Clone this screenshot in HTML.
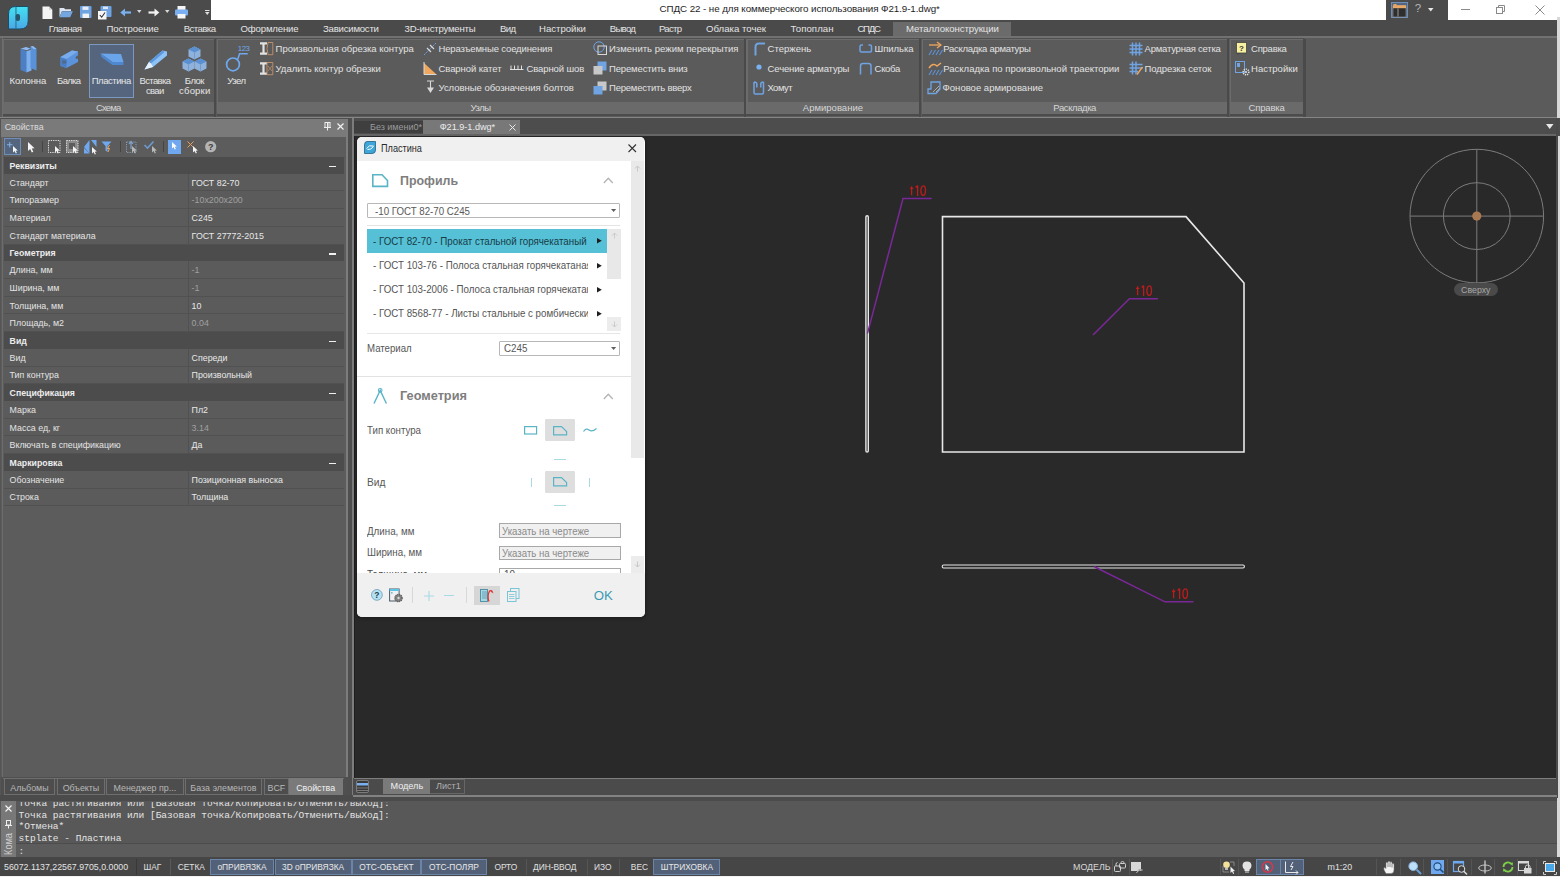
<!DOCTYPE html>
<html><head><meta charset="utf-8">
<style>
*{margin:0;padding:0;box-sizing:border-box}
html,body{width:1560px;height:877px;overflow:hidden;background:#3c3c3c;font-family:"Liberation Sans",sans-serif;font-size:9.5px;color:#e6e6e6}
.a{position:absolute}
.t{position:absolute;white-space:nowrap;line-height:1}
svg{position:absolute;overflow:visible}
</style></head><body>
<div class="a" style="left:0px;top:0px;width:1560px;height:20px;background:#4b4b4b;"></div>
<div class="a" style="left:211px;top:0px;width:1176px;height:19.5px;background:#ffffff;"></div>
<div class="a" style="left:1448px;top:0px;width:112px;height:19.5px;background:#ffffff;"></div>
<div class="a" style="left:0px;top:19.5px;width:1557px;height:17px;background:#4a4a4a;"></div>
<div class="t" style="left:659.5px;top:3.68px;font-size:9.8px;color:#1e1e1e;letter-spacing:-0.078px;">СПДС 22 - не для коммерческого использования Ф21.9-1.dwg*</div>
<svg style="left:8px;top:5.5px" width="21" height="24" viewBox="0 0 21 24"><defs><linearGradient id="lg" x1="0" y1="0" x2="0" y2="1"><stop offset="0" stop-color="#44e0f2"/><stop offset="1" stop-color="#4aa8e6"/></linearGradient></defs>
<path d="M7.5 0.5 H20.2 V15 Q20.2 23 12 23 H0.5 V8 Q0.5 0.5 7.5 0.5Z" fill="url(#lg)" stroke="#1d4c66" stroke-width="1"/>
<rect x="7.3" y="1" width="1.3" height="22" fill="#2a6e90" opacity="0.8"/>
<rect x="7.6" y="8" width="4.4" height="7" rx="2" fill="#25566e"/></svg>
<svg style="left:42px;top:5.5px" width="11" height="13.5" viewBox="0 0 11 13.5"><path d="M0.5 0.5 H7 L10.3 3.8 V13 H0.5Z" fill="#f4f4f4"/><path d="M7 0.5 V3.8 H10.3" fill="#cfcfcf"/></svg>
<svg style="left:59px;top:6.5px" width="14" height="11" viewBox="0 0 14 11"><path d="M0.5 1 H5 L6.2 2.3 H12 V4 H3 L0.5 10Z" fill="#dde6f0"/><path d="M3 4.2 H13.8 L11.2 10.3 H0.5Z" fill="#74a6e0"/></svg>
<svg style="left:79.5px;top:6px" width="12" height="12.5" viewBox="0 0 12 12.5"><rect x="0" y="0" width="11.5" height="12" rx="1" fill="#6fa3e2"/><rect x="2.5" y="0.6" width="6" height="3.3" fill="#e9eef6"/><rect x="2.5" y="7.6" width="6.5" height="4.4" fill="#f2f2f2"/></svg>
<svg style="left:97.5px;top:5.5px" width="14" height="14" viewBox="0 0 14 14"><rect x="2.5" y="0" width="11" height="11" rx="1" fill="#6fa3e2"/><rect x="5" y="0.6" width="5" height="2.5" fill="#dbe6f2"/><rect x="0" y="5" width="8.5" height="8.5" fill="#f6f6f6"/><path d="M1.8 9 L3.7 11.2 L7 6.5" fill="none" stroke="#333" stroke-width="1.1"/></svg>
<svg style="left:119.5px;top:7.5px" width="12" height="9" viewBox="0 0 12 9"><path d="M11 4.5 H3.5" stroke="#7ab0ee" stroke-width="2.2"/><path d="M0.3 4.5 L5 0.5 V8.5Z" fill="#7ab0ee"/></svg>
<svg style="left:136.5px;top:10px" width="5" height="4" viewBox="0 0 5 4"><path d="M0 0 H4.5 L2.25 3Z" fill="#d8d8d8"/></svg>
<svg style="left:147.5px;top:7.5px" width="12" height="9" viewBox="0 0 12 9"><path d="M0.5 4.5 H8" stroke="#f2f2f2" stroke-width="2.2"/><path d="M11.3 4.5 L6.5 0.5 V8.5Z" fill="#f2f2f2"/></svg>
<svg style="left:164.5px;top:10px" width="5" height="4" viewBox="0 0 5 4"><path d="M0 0 H4.5 L2.25 3Z" fill="#d8d8d8"/></svg>
<svg style="left:175px;top:6px" width="13" height="13" viewBox="0 0 13 13"><rect x="2.5" y="0" width="8" height="4" fill="#f4f4f4"/><rect x="0" y="3.5" width="13" height="6" rx="1" fill="#79aef0"/><rect x="2.5" y="8" width="8" height="4.5" fill="#f4f4f4"/></svg>
<svg style="left:204.5px;top:10px" width="5" height="6" viewBox="0 0 5 6"><rect x="0" y="0" width="4.5" height="1" fill="#e0e0e0"/><path d="M0 2 H4.5 L2.25 5Z" fill="#e0e0e0"/></svg>
<div class="a" style="left:1386.3px;top:0px;width:61.7px;height:19.5px;background:#4b4b4b;"></div>
<svg style="left:1391px;top:1.5px" width="17" height="16" viewBox="0 0 17 16"><rect x="0.5" y="0.5" width="16" height="15" fill="#55657d" stroke="#6c8fb8" stroke-width="1"/><rect x="2" y="4" width="13" height="11" fill="#2e2e2e" stroke="#9a9a9a" stroke-width="0.6"/><rect x="2" y="3.2" width="13" height="3" fill="#e8a868"/><rect x="2.5" y="2" width="3" height="1.5" fill="#e8a868"/><rect x="6.5" y="6.5" width="1" height="8" fill="#9a9a9a"/></svg>
<div class="t" style="left:1414.8px;top:3.46px;font-size:11.5px;color:#b8b8b8;">?</div>
<svg style="left:1428px;top:7.5px" width="6" height="5" viewBox="0 0 6 5"><path d="M0 0 H5.5 L2.75 3.5Z" fill="#e8e8e8"/></svg>
<div class="a" style="left:1461px;top:9px;width:8.5px;height:1px;background:#8a8a8a;"></div>
<svg style="left:1496px;top:5px" width="9" height="9" viewBox="0 0 9 9"><rect x="0.5" y="2.5" width="6" height="6" fill="none" stroke="#8a8a8a" stroke-width="1"/><path d="M2.5 2.5 V0.5 H8.5 V6.5 H6.5" fill="none" stroke="#8a8a8a" stroke-width="1"/></svg>
<svg style="left:1534.5px;top:5px" width="10" height="10" viewBox="0 0 10 10"><path d="M0.5 0.5 L9.5 9.5 M9.5 0.5 L0.5 9.5" stroke="#8a8a8a" stroke-width="1"/></svg>
<div class="a" style="left:1557.3px;top:17px;width:2.7px;height:860px;background:#d8d8d8;"></div>
<div class="a" style="left:893px;top:22px;width:118px;height:14.5px;background:#6b6b6b;"></div>
<div class="t" style="left:48.7px;top:24.47px;font-size:9.6px;color:#e4e4e4;letter-spacing:-0.540px;">Главная</div>
<div class="t" style="left:106.4px;top:24.47px;font-size:9.6px;color:#e4e4e4;letter-spacing:-0.095px;">Построение</div>
<div class="t" style="left:183.8px;top:24.47px;font-size:9.6px;color:#e4e4e4;letter-spacing:-0.580px;">Вставка</div>
<div class="t" style="left:240.5px;top:24.47px;font-size:9.6px;color:#e4e4e4;letter-spacing:-0.154px;">Оформление</div>
<div class="t" style="left:323px;top:24.47px;font-size:9.6px;color:#e4e4e4;letter-spacing:-0.226px;">Зависимости</div>
<div class="t" style="left:404.6px;top:24.47px;font-size:9.6px;color:#e4e4e4;letter-spacing:-0.215px;">3D-инструменты</div>
<div class="t" style="left:500px;top:24.47px;font-size:9.6px;color:#e4e4e4;letter-spacing:-0.684px;">Вид</div>
<div class="t" style="left:539px;top:24.47px;font-size:9.6px;color:#e4e4e4;letter-spacing:-0.009px;">Настройки</div>
<div class="t" style="left:609.7px;top:24.47px;font-size:9.6px;color:#e4e4e4;letter-spacing:-0.681px;">Вывод</div>
<div class="t" style="left:659px;top:24.47px;font-size:9.6px;color:#e4e4e4;letter-spacing:-0.740px;">Растр</div>
<div class="t" style="left:706px;top:24.47px;font-size:9.6px;color:#e4e4e4;letter-spacing:0.014px;">Облака точек</div>
<div class="t" style="left:790.5px;top:24.47px;font-size:9.6px;color:#e4e4e4;letter-spacing:0.096px;">Топоплан</div>
<div class="t" style="left:857.4px;top:24.47px;font-size:9.6px;color:#e4e4e4;letter-spacing:-1.222px;">СПДС</div>
<div class="t" style="left:906px;top:24.47px;font-size:9.6px;color:#e4e4e4;letter-spacing:-0.059px;">Металлоконструкции</div>
<div class="a" style="left:0px;top:36.5px;width:1557px;height:81.5px;background:#5b5b5b;"></div>
<div class="a" style="left:0px;top:36px;width:1557px;height:2px;background:#717171;"></div>
<div class="a" style="left:0px;top:116.5px;width:1557px;height:1.4px;background:#858585;"></div>
<div class="a" style="left:3px;top:38px;width:1301px;height:1px;background:#505050;"></div>
<div class="a" style="left:1.5px;top:38px;width:1px;height:79px;background:#6e6e6e;"></div>
<div class="a" style="left:3px;top:101.7px;width:211px;height:11.9px;background:#6a6a6a;"></div>
<div class="a" style="left:3px;top:39px;width:211px;height:1.2px;background:#6c6c6c;"></div>
<div class="a" style="left:3px;top:39px;width:1.2px;height:76px;background:#6c6c6c;"></div>
<div class="a" style="left:3px;top:113.6px;width:213px;height:2.9px;background:#4c4c4c;"></div>
<div class="a" style="left:213.7px;top:39px;width:2.3px;height:78px;background:#4a4a4a;"></div>
<div class="a" style="left:216.8px;top:101.7px;width:527.2px;height:11.9px;background:#6a6a6a;"></div>
<div class="a" style="left:216.8px;top:39px;width:527.2px;height:1.2px;background:#6c6c6c;"></div>
<div class="a" style="left:216.8px;top:39px;width:1.2px;height:76px;background:#6c6c6c;"></div>
<div class="a" style="left:216.8px;top:113.6px;width:529.2px;height:2.9px;background:#4c4c4c;"></div>
<div class="a" style="left:743.7px;top:39px;width:2.3px;height:78px;background:#4a4a4a;"></div>
<div class="a" style="left:746.4px;top:101.7px;width:173.10000000000002px;height:11.9px;background:#6a6a6a;"></div>
<div class="a" style="left:746.4px;top:39px;width:173.10000000000002px;height:1.2px;background:#6c6c6c;"></div>
<div class="a" style="left:746.4px;top:39px;width:1.2px;height:76px;background:#6c6c6c;"></div>
<div class="a" style="left:746.4px;top:113.6px;width:175.10000000000002px;height:2.9px;background:#4c4c4c;"></div>
<div class="a" style="left:919.2px;top:39px;width:2.3px;height:78px;background:#4a4a4a;"></div>
<div class="a" style="left:921.5px;top:101.7px;width:305.29999999999995px;height:11.9px;background:#6a6a6a;"></div>
<div class="a" style="left:921.5px;top:39px;width:305.29999999999995px;height:1.2px;background:#6c6c6c;"></div>
<div class="a" style="left:921.5px;top:39px;width:1.2px;height:76px;background:#6c6c6c;"></div>
<div class="a" style="left:921.5px;top:113.6px;width:307.29999999999995px;height:2.9px;background:#4c4c4c;"></div>
<div class="a" style="left:1226.5px;top:39px;width:2.3px;height:78px;background:#4a4a4a;"></div>
<div class="a" style="left:1229.8px;top:101.7px;width:73.79999999999995px;height:11.9px;background:#6a6a6a;"></div>
<div class="a" style="left:1229.8px;top:39px;width:73.79999999999995px;height:1.2px;background:#6c6c6c;"></div>
<div class="a" style="left:1229.8px;top:39px;width:1.2px;height:76px;background:#6c6c6c;"></div>
<div class="a" style="left:1229.8px;top:113.6px;width:75.79999999999995px;height:2.9px;background:#4c4c4c;"></div>
<div class="a" style="left:1303.3px;top:39px;width:2.3px;height:78px;background:#4a4a4a;"></div>
<div class="a" style="left:89px;top:44px;width:44.7px;height:53.6px;background:#55657d;border:1px solid #7a98c0"></div>
<div class="t" style="left:95.9px;top:102.82px;font-size:9.5px;color:#d6d6d6;letter-spacing:-0.801px;">Схема</div>
<div class="t" style="left:470.5px;top:102.82px;font-size:9.5px;color:#d6d6d6;letter-spacing:-0.541px;">Узлы</div>
<div class="t" style="left:802.8px;top:102.82px;font-size:9.5px;color:#d6d6d6;letter-spacing:0.012px;">Армирование</div>
<div class="t" style="left:1053.3px;top:102.82px;font-size:9.5px;color:#d6d6d6;letter-spacing:-0.404px;">Раскладка</div>
<div class="t" style="left:1248.6px;top:102.82px;font-size:9.5px;color:#d6d6d6;letter-spacing:-0.195px;">Справка</div>
<div class="t" style="left:9.6px;top:76.42px;font-size:9.5px;color:#e6e6e6;letter-spacing:-0.103px;">Колонна</div>
<div class="t" style="left:57.1px;top:76.42px;font-size:9.5px;color:#e6e6e6;letter-spacing:-0.677px;">Балка</div>
<div class="t" style="left:91.7px;top:76.42px;font-size:9.5px;color:#e6e6e6;letter-spacing:-0.442px;">Пластина</div>
<div class="t" style="left:139.4px;top:76.42px;font-size:9.5px;color:#e6e6e6;letter-spacing:-0.602px;">Вставка</div>
<div class="t" style="left:146px;top:86.02px;font-size:9.5px;color:#e6e6e6;letter-spacing:-0.660px;">сваи</div>
<div class="t" style="left:184.8px;top:76.42px;font-size:9.5px;color:#e6e6e6;letter-spacing:-0.506px;">Блок</div>
<div class="t" style="left:179.1px;top:86.02px;font-size:9.5px;color:#e6e6e6;letter-spacing:0.176px;">сборки</div>
<div class="t" style="left:227.2px;top:76.42px;font-size:9.5px;color:#e6e6e6;letter-spacing:-0.487px;">Узел</div>
<svg style="left:19.5px;top:45.5px" width="17" height="27" viewBox="0 0 17 27"><path d="M0.5 2.8 L7 5.2 V26.5 L0.5 24Z" fill="#4c7fc4"/><path d="M6.5 5.2 L11.5 3.5 V24.5 L6.5 26.5Z" fill="#7db0ec"/><path d="M10.5 0.5 L16.5 2.8 V24.5 L10.5 22Z" fill="#5a92da"/><path d="M0.5 2.8 L6 1 L10.5 2.6 L7 4.2Z M10.5 0.5 L13 0 L16.5 2.8 L14 3.2Z" fill="#8ebcf2"/></svg>
<svg style="left:60px;top:49.5px" width="18.5" height="18.5" viewBox="0 0 18.5 18.5"><path d="M0.5 7 L12 0.5 L18 1.5 V5.5 L15.8 6.8 V9 L18 8.5 V12 L6.5 18 L0.5 16Z" fill="#5b94dc"/><path d="M0.5 7 L6.5 9 V18 L0.5 16Z" fill="#4a7fc4"/><path d="M0.5 7 L12 0.5 L18 1.5 L6.5 9Z" fill="#78acea"/><path d="M2.2 10.5 H6.5 V13.5 H2.2Z" fill="#5a5a5a" opacity="0.55"/></svg>
<svg style="left:99.5px;top:53px" width="24" height="12.5" viewBox="0 0 24 12.5"><path d="M0.5 0.5 L21 1 L23.5 9 L12.5 9 Z" fill="#6aa4ea"/><path d="M0.5 0.5 L1.5 4 L12.5 12 H23.5 V9 H12.5Z" fill="#4f88d0"/></svg>
<svg style="left:143.5px;top:49.5px" width="23.5" height="20" viewBox="0 0 23.5 20"><path d="M0.5 19.5 L5 12 L18.5 0.5 L23 1.5 V5.5 L9 17 Z" fill="#8cc2f6"/><path d="M5 12 L18.5 0.5 L20.5 2 L7 13.5Z" fill="#5c98e0"/><path d="M0.5 19.5 L5 12 L7 13.5 L9 17Z" fill="#e6f2ff"/></svg>
<svg style="left:181.5px;top:45.5px" width="25" height="27" viewBox="0 0 25 27"><path d="M12.5 0.5 L18.5 3.5 V10.5 L12.5 13.5 L6.5 10.5 V3.5Z" fill="#8fb2dc"/><path d="M12.5 0.5 L18.5 3.5 L12.5 6.5 L6.5 3.5Z" fill="#5a8fd2"/><path d="M12.5 6.5 V13.5" stroke="#6f95c4" stroke-width="0.8"/><path d="M6.5 12.5 L12.5 15.5 V22.5 L6.5 25.5 L0.5 22.5 V15.5Z" fill="#8fb2dc"/><path d="M6.5 12.5 L12.5 15.5 L6.5 18.5 L0.5 15.5Z" fill="#5a8fd2"/><path d="M6.5 18.5 V25.5" stroke="#6f95c4" stroke-width="0.8"/><path d="M18.5 12.5 L24.5 15.5 V22.5 L18.5 25.5 L12.5 22.5 V15.5Z" fill="#8fb2dc"/><path d="M18.5 12.5 L24.5 15.5 L18.5 18.5 L12.5 15.5Z" fill="#5a8fd2"/><path d="M18.5 18.5 V25.5" stroke="#6f95c4" stroke-width="0.8"/></svg>
<svg style="left:225px;top:46px" width="26" height="26" viewBox="0 0 26 26"><circle cx="8" cy="18.4" r="6.4" fill="none" stroke="#70a8ec" stroke-width="1.7"/><path d="M12.6 13.6 L14.6 7.8 H22.7" fill="none" stroke="#70a8ec" stroke-width="1.5"/></svg>
<div class="t" style="left:237.8px;top:45.24px;font-size:7.8px;color:#70a8ec;letter-spacing:-0.507px;">123</div>
<svg style="left:260px;top:42px" width="14" height="13.5" viewBox="0 0 14 13.5"><path d="M0 0.3 H7 V2.6 H4.6 V10.4 H7 V12.7 H0 V10.4 H2.4 V2.6 H0Z" fill="#e2e2e2"/><path d="M8 0.5 H12.8 V12.7 H8 Q6 6.6 8 0.5Z" fill="none" stroke="#c8936a" stroke-width="0.9"/></svg>
<svg style="left:260px;top:61.5px" width="14" height="13.5" viewBox="0 0 14 13.5"><path d="M0 0.3 H7 V2.6 H4.6 V10.4 H7 V12.7 H0 V10.4 H2.4 V2.6 H0Z" fill="#e2e2e2"/><path d="M7 0.5 H12.8 V12.7 H7 V0.5Z" fill="none" stroke="#c8936a" stroke-width="0.9"/><path d="M8 4 L12 9 M12 4 L8 9" stroke="#c8936a" stroke-width="0.7"/></svg>
<div class="t" style="left:275.6px;top:44.22px;font-size:9.5px;color:#e2e2e2;letter-spacing:0.005px;">Произвольная обрезка контура</div>
<div class="t" style="left:275.6px;top:63.82px;font-size:9.5px;color:#e2e2e2;letter-spacing:-0.025px;">Удалить контур обрезки</div>
<svg style="left:423px;top:41.5px" width="14" height="14" viewBox="0 0 14 14"><path d="M1 13 L13 1" stroke="#6fa3e2" stroke-width="1" stroke-dasharray="2 1"/><path d="M4 6 L8 10 M7 3 L11 7" stroke="#d8d8d8" stroke-width="1.2"/></svg>
<svg style="left:422.5px;top:62px" width="14" height="13" viewBox="0 0 14 13"><path d="M1 1 V12 H13Z" fill="#f0a860"/><path d="M1 0 V12.5 H13.5" fill="none" stroke="#d8d8d8" stroke-width="1"/></svg>
<svg style="left:426px;top:80px" width="9" height="13" viewBox="0 0 9 13"><path d="M1 1 H8 M4.5 1 V8 M2 8 H7 L4.5 12Z" stroke="#d8d8d8" stroke-width="1.1" fill="#d8d8d8"/></svg>
<div class="t" style="left:438.5px;top:44.22px;font-size:9.5px;color:#e2e2e2;letter-spacing:-0.143px;">Неразъемные соединения</div>
<div class="t" style="left:438.5px;top:63.82px;font-size:9.5px;color:#e2e2e2;letter-spacing:-0.071px;">Сварной катет</div>
<svg style="left:510px;top:65px" width="14" height="6" viewBox="0 0 14 6"><path d="M0 4.5 H13.5 M1 0.5 V4.5 M4.5 0.5 V4.5 M8 0.5 V4.5 M11.5 0.5 V4.5" stroke="#e0e0e0" stroke-width="1"/></svg>
<div class="t" style="left:526.4px;top:63.82px;font-size:9.5px;color:#e2e2e2;letter-spacing:-0.090px;">Сварной шов</div>
<div class="t" style="left:438.5px;top:82.62px;font-size:9.5px;color:#e2e2e2;letter-spacing:-0.023px;">Условные обозначения болтов</div>
<svg style="left:592.5px;top:41px" width="14" height="14" viewBox="0 0 14 14"><circle cx="6" cy="6" r="5.2" fill="none" stroke="#6fa3e2" stroke-width="1"/><rect x="5" y="5" width="8.5" height="8.5" fill="none" stroke="#d8d8d8" stroke-width="1"/></svg>
<svg style="left:592.5px;top:61px" width="14" height="14" viewBox="0 0 14 14"><rect x="4.5" y="0.5" width="9" height="9" fill="#6fa3e2"/><rect x="0.5" y="5" width="9" height="8.5" fill="#c8c8c8"/></svg>
<svg style="left:592.5px;top:80.5px" width="14" height="14" viewBox="0 0 14 14"><rect x="4.5" y="0.5" width="9" height="9" fill="#c8c8c8"/><rect x="0.5" y="5" width="9" height="8.5" fill="#6fa3e2"/></svg>
<div class="t" style="left:609px;top:44.22px;font-size:9.5px;color:#e2e2e2;letter-spacing:0.027px;">Изменить режим перекрытия</div>
<div class="t" style="left:609px;top:63.82px;font-size:9.5px;color:#e2e2e2;letter-spacing:-0.140px;">Переместить вниз</div>
<div class="t" style="left:609px;top:82.62px;font-size:9.5px;color:#e2e2e2;letter-spacing:-0.202px;">Переместить вверх</div>
<svg style="left:753.5px;top:42px" width="12" height="14" viewBox="0 0 12 14"><path d="M1.5 13.5 V5 Q1.5 1.5 5 1.5 H11" fill="none" stroke="#6fa3e2" stroke-width="2"/></svg>
<svg style="left:756px;top:63.5px" width="6" height="6" viewBox="0 0 6 6"><circle cx="3" cy="3" r="2.6" fill="#79b2f2"/></svg>
<svg style="left:752px;top:80.5px" width="13" height="14" viewBox="0 0 13 14"><path d="M2 1 V11.5 Q2 13 3.5 13 H10 Q11.5 13 11.5 11.5 V1 M2 1 Q4.8 1 4.8 3 V6.5 M11.5 1 Q8.8 1 8.8 3 V6.5" fill="none" stroke="#6fa3e2" stroke-width="1.5"/></svg>
<div class="t" style="left:767.6px;top:44.22px;font-size:9.5px;color:#e2e2e2;letter-spacing:0.013px;">Стержень</div>
<div class="t" style="left:767.6px;top:63.82px;font-size:9.5px;color:#e2e2e2;letter-spacing:-0.142px;">Сечение арматуры</div>
<div class="t" style="left:767.4px;top:82.62px;font-size:9.5px;color:#e2e2e2;letter-spacing:-0.513px;">Хомут</div>
<svg style="left:858.5px;top:44px" width="14" height="9" viewBox="0 0 14 9"><path d="M4 1 H2.5 Q1 1 1 2.5 V6.5 Q1 8 2.5 8 H11 Q12.5 8 12.5 6.5 V2.5 Q12.5 1 11 1 H9.5" fill="none" stroke="#6fa3e2" stroke-width="1.5"/></svg>
<svg style="left:858.5px;top:62px" width="14" height="13" viewBox="0 0 14 13"><path d="M1.5 12.5 V4 Q1.5 1.5 4 1.5 H9.5 Q12 1.5 12 4 V12.5" fill="none" stroke="#6fa3e2" stroke-width="1.5"/></svg>
<div class="t" style="left:874.6px;top:44.22px;font-size:9.5px;color:#e2e2e2;letter-spacing:-0.050px;">Шпилька</div>
<div class="t" style="left:874.6px;top:63.82px;font-size:9.5px;color:#e2e2e2;letter-spacing:-0.303px;">Скоба</div>
<svg style="left:927.5px;top:41px" width="15" height="15" viewBox="0 0 15 15"><path d="M1 4 H12" stroke="#f0a860" stroke-width="1.3"/><path d="M9 1 L13 4 L9 7" fill="none" stroke="#f0a860" stroke-width="1.2"/><path d="M1 14 L4 9 M4.5 14 L7.5 9 M8 14 L11 9 M11.5 14 L14.5 9" stroke="#5d92d6" stroke-width="1.1"/></svg>
<svg style="left:927.5px;top:61px" width="15" height="15" viewBox="0 0 15 15"><path d="M1 7 Q5 1 9 5 L13 2" fill="none" stroke="#f0a860" stroke-width="1.5"/><path d="M1 14 L4 9 M4.5 14 L7.5 9 M8 14 L11 9 M11.5 14 L14.5 9" stroke="#5d92d6" stroke-width="1.1"/></svg>
<svg style="left:927px;top:80px" width="15" height="15" viewBox="0 0 15 15"><path d="M1 9 H4 V2 H13 V9 L9 13.5 H1Z" fill="none" stroke="#6fa3e2" stroke-width="1.3"/><path d="M6 12 L12 6 M9 12 L13 8" stroke="#aaaaaa" stroke-width="1"/></svg>
<div class="t" style="left:943.3px;top:44.22px;font-size:9.5px;color:#e2e2e2;letter-spacing:-0.286px;">Раскладка арматуры</div>
<div class="t" style="left:943.3px;top:63.82px;font-size:9.5px;color:#e2e2e2;letter-spacing:-0.005px;">Раскладка по произвольной траектории</div>
<div class="t" style="left:942.6px;top:82.62px;font-size:9.5px;color:#e2e2e2;letter-spacing:0.010px;">Фоновое армирование</div>
<svg style="left:1129px;top:41.5px" width="14" height="14" viewBox="0 0 14 14"><path d="M3.5 0.5 V13.5 M7 0.5 V13.5 M10.5 0.5 V13.5 M0.5 3.5 H13.5 M0.5 7 H13.5 M0.5 10.5 H13.5" stroke="#6fa3e2" stroke-width="1.5"/></svg>
<svg style="left:1129px;top:61px" width="14" height="14" viewBox="0 0 14 14"><path d="M3.5 0.5 V13.5 M7 0.5 V13.5 M0.5 3.5 H13.5 M0.5 7 H13.5 M0.5 10.5 H9" stroke="#6fa3e2" stroke-width="1.5"/><path d="M8 13.5 L13.5 6" stroke="#f0a860" stroke-width="1.3"/></svg>
<div class="t" style="left:1144.6px;top:44.22px;font-size:9.5px;color:#e2e2e2;letter-spacing:-0.223px;">Арматурная сетка</div>
<div class="t" style="left:1144.6px;top:63.82px;font-size:9.5px;color:#e2e2e2;letter-spacing:-0.088px;">Подрезка сеток</div>
<svg style="left:1235.5px;top:42px" width="12" height="13" viewBox="0 0 12 13"><rect x="0.5" y="0.5" width="10" height="10.5" fill="#f6f0a0" stroke="#444" stroke-width="0.8"/><path d="M2 11 L1 13 L4 11" fill="#444"/><text x="5.5" y="9" font-size="8" font-family="Liberation Sans" font-weight="bold" text-anchor="middle" fill="#333">?</text></svg>
<svg style="left:1235px;top:61px" width="15" height="15" viewBox="0 0 15 15"><rect x="0.5" y="0.5" width="9" height="11" fill="none" stroke="#6fa3e2" stroke-width="1"/><rect x="2" y="2" width="3" height="4" fill="#6fa3e2"/><circle cx="11" cy="11" r="2.8" fill="none" stroke="#e0e0e0" stroke-width="1.6" stroke-dasharray="1.2 0.9"/><circle cx="11" cy="11" r="1" fill="#e0e0e0"/></svg>
<div class="t" style="left:1251px;top:44.22px;font-size:9.5px;color:#e2e2e2;letter-spacing:-0.228px;">Справка</div>
<div class="t" style="left:1251px;top:63.82px;font-size:9.5px;color:#e2e2e2;letter-spacing:0.015px;">Настройки</div>
<div class="a" style="left:0px;top:118px;width:353px;height:680px;background:#4e4e4e;"></div>
<div class="a" style="left:0px;top:118px;width:1px;height:680px;background:#555555;"></div>
<div class="a" style="left:1px;top:118.5px;width:347px;height:17.3px;background:#7a7a7a;"></div>
<div class="t" style="left:4.7px;top:122.71px;font-size:8.9px;color:#dcdcdc;">Свойства</div>
<svg style="left:323.5px;top:121.5px" width="7" height="9" viewBox="0 0 7 9"><rect x="1" y="0.5" width="5" height="5" fill="none" stroke="#eeeeee" stroke-width="1"/><rect x="3" y="1" width="1.5" height="4.5" fill="#eeeeee"/><path d="M0 5.5 H7 M3.5 5.5 V8.5" stroke="#eeeeee" stroke-width="1"/></svg>
<svg style="left:337px;top:122.5px" width="7" height="7" viewBox="0 0 7 7"><path d="M0.5 0.5 L6.5 6.5 M6.5 0.5 L0.5 6.5" stroke="#f2f2f2" stroke-width="1.2"/></svg>
<div class="a" style="left:1px;top:136px;width:346px;height:641.5px;background:#5c5c5c;"></div>
<div class="a" style="left:1.5px;top:136px;width:1.2px;height:641px;background:#6c6c6c;"></div>
<div class="a" style="left:1px;top:135.6px;width:346px;height:1.3px;background:#7a7a7a;"></div>
<div class="a" style="left:345.5px;top:118.5px;width:2.6px;height:658.5px;background:#7c7c7c;"></div>
<div class="a" style="left:3.5px;top:138.2px;width:17.7px;height:17.3px;background:#55657d;border:1px solid #6f8fbb"></div>
<svg style="left:6.7px;top:141.8px" width="5.5" height="5.5" viewBox="0 0 5.5 5.5"><path d="M2.75 0 V5.5 M0 2.75 H5.5" stroke="#8ab8f2" stroke-width="0.9"/></svg>
<svg style="left:13px;top:146px" width="7" height="11" viewBox="0 0 7 11"><path d="M0 0 V6.6 L1.6 5.1 L2.8 7.6 L3.9 7.1 L2.8 4.7 L4.8 4.6Z" fill="#f4f4f4"/></svg>
<svg style="left:27.8px;top:142px" width="7" height="11" viewBox="0 0 7 11"><path d="M0 0 V9 L2.2 7 L3.8 10.5 L5.3 9.8 L3.8 6.5 L6.5 6.3Z" fill="#f4f4f4"/></svg>
<div class="a" style="left:41.8px;top:141px;width:1.2px;height:11px;background:#454545;"></div>
<svg style="left:47.5px;top:140px" width="13" height="13" viewBox="0 0 13 13"><rect x="0.5" y="0.5" width="11.5" height="12" fill="none" stroke="#dddddd" stroke-width="1" stroke-dasharray="1.3 1"/></svg>
<svg style="left:55.4px;top:146px" width="7" height="11" viewBox="0 0 7 11"><path d="M0 0 V6.6 L1.6 5.1 L2.8 7.6 L3.9 7.1 L2.8 4.7 L4.8 4.6Z" fill="#f4f4f4"/></svg>
<svg style="left:65.5px;top:140px" width="13" height="13" viewBox="0 0 13 13"><rect x="0.5" y="0.5" width="11.5" height="12" fill="#8a8a8a" stroke="#dddddd" stroke-width="1" stroke-dasharray="1.3 1"/><rect x="3" y="3" width="6" height="6" fill="#5c5c5c"/></svg>
<svg style="left:73.3px;top:146px" width="7" height="11" viewBox="0 0 7 11"><path d="M0 0 V6.6 L1.6 5.1 L2.8 7.6 L3.9 7.1 L2.8 4.7 L4.8 4.6Z" fill="#f4f4f4"/></svg>
<svg style="left:83.5px;top:140px" width="14" height="14" viewBox="0 0 14 14"><path d="M5.5 0 V13.5 L0 7Z M7 0 H12.5 V7Z" fill="#6fa8ef"/><path d="M0 13.5 H5.5 L0 8Z" fill="#6fa8ef"/></svg>
<svg style="left:91.7px;top:146.5px" width="7" height="11" viewBox="0 0 7 11"><path d="M0 0 V6.6 L1.6 5.1 L2.8 7.6 L3.9 7.1 L2.8 4.7 L4.8 4.6Z" fill="#f4f4f4"/></svg>
<svg style="left:101px;top:140.5px" width="11" height="12" viewBox="0 0 11 12"><path d="M0.5 0.5 H10.5 L6.5 5 V11 L4.5 9.5 V5Z" fill="#6fa8ef"/></svg>
<svg style="left:107px;top:145px" width="4" height="7" viewBox="0 0 4 7"><path d="M2.5 0 L0.5 3.5 H2.5 L1 7" fill="none" stroke="#f0a860" stroke-width="1"/></svg>
<div class="a" style="left:119.8px;top:141px;width:1.2px;height:11px;background:#454545;"></div>
<svg style="left:125.5px;top:140.5px" width="11" height="12" viewBox="0 0 11 12"><rect x="0.5" y="1" width="9.5" height="10.5" fill="none" stroke="#8fa6c0" stroke-width="0.9" stroke-dasharray="1.2 1.1"/><path d="M5 8 V1 M3 3 L5 0.5 L7 3" fill="none" stroke="#7ea4d0" stroke-width="1.2"/></svg>
<svg style="left:131.5px;top:145.5px" width="7" height="11" viewBox="0 0 7 11"><path d="M0 0 V6.6 L1.6 5.1 L2.8 7.6 L3.9 7.1 L2.8 4.7 L4.8 4.6Z" fill="#b8b8b8"/></svg>
<svg style="left:144px;top:140.5px" width="10" height="8" viewBox="0 0 10 8"><path d="M0.5 4 L3.5 7 L9.5 0.5" fill="none" stroke="#6d9ad0" stroke-width="1.6"/></svg>
<svg style="left:151.5px;top:146px" width="7" height="11" viewBox="0 0 7 11"><path d="M0 0 V6.6 L1.6 5.1 L2.8 7.6 L3.9 7.1 L2.8 4.7 L4.8 4.6Z" fill="#b8b8b8"/></svg>
<div class="a" style="left:162.5px;top:141px;width:1.2px;height:11px;background:#454545;"></div>
<div class="a" style="left:168px;top:140px;width:13.2px;height:13.8px;background:#6fa8ef;"></div>
<svg style="left:172px;top:141.5px" width="7" height="11" viewBox="0 0 7 11"><path d="M0 0 V6.6 L1.6 5.1 L2.8 7.6 L3.9 7.1 L2.8 4.7 L4.8 4.6Z" fill="#ffffff"/></svg>
<svg style="left:186.5px;top:140.5px" width="7" height="7" viewBox="0 0 7 7"><path d="M0.5 0.5 L6.5 6.5 M6.5 0.5 L0.5 6.5" stroke="#e8a060" stroke-width="1"/></svg>
<svg style="left:193px;top:145.5px" width="7" height="11" viewBox="0 0 7 11"><path d="M0 0 V6.6 L1.6 5.1 L2.8 7.6 L3.9 7.1 L2.8 4.7 L4.8 4.6Z" fill="#f4f4f4"/></svg>
<svg style="left:204.5px;top:141px" width="11.5" height="11.5" viewBox="0 0 11.5 11.5"><circle cx="5.7" cy="5.7" r="5.6" fill="#b4b4b4"/><text x="5.7" y="9" font-size="9" font-weight="bold" font-family="Liberation Sans" text-anchor="middle" fill="#3a3a3a">?</text></svg>
<div class="a" style="left:3px;top:156.5px;width:342px;height:0.8px;background:#555555;"></div>
<div class="a" style="left:3.7px;top:157.0px;width:340.3px;height:16.8px;background:#4c4c4c;"></div>
<div class="t" style="left:9.6px;top:161.88px;font-size:8.75px;color:#ececec;font-weight:bold;">Реквизиты</div>
<div class="a" style="left:328.8px;top:165.5px;width:7px;height:1.6px;background:#f0f0f0;"></div>
<div class="a" style="left:3.7px;top:173.8px;width:340.3px;height:17.68px;background:#5b5b5b;"></div>
<div class="a" style="left:3.7px;top:190.48000000000002px;width:340.3px;height:1px;background:#515151;"></div>
<div class="a" style="left:188.3px;top:173.8px;width:1px;height:17.68px;background:#515151;"></div>
<div class="t" style="left:9.6px;top:178.67px;font-size:8.85px;color:#e4e4e4;">Стандарт</div>
<div class="t" style="left:191.6px;top:178.67px;font-size:8.85px;color:#e8e8e8;">ГОСТ 82-70</div>
<div class="a" style="left:3.7px;top:191.48000000000002px;width:340.3px;height:17.68px;background:#5b5b5b;"></div>
<div class="a" style="left:3.7px;top:208.16000000000003px;width:340.3px;height:1px;background:#515151;"></div>
<div class="a" style="left:188.3px;top:191.48000000000002px;width:1px;height:17.68px;background:#515151;"></div>
<div class="t" style="left:9.6px;top:196.35px;font-size:8.85px;color:#e4e4e4;">Типоразмер</div>
<div class="t" style="left:191.6px;top:196.35px;font-size:8.85px;color:#a0a0a0;">-10x200x200</div>
<div class="a" style="left:3.7px;top:209.16000000000003px;width:340.3px;height:17.68px;background:#5b5b5b;"></div>
<div class="a" style="left:3.7px;top:225.84000000000003px;width:340.3px;height:1px;background:#515151;"></div>
<div class="a" style="left:188.3px;top:209.16000000000003px;width:1px;height:17.68px;background:#515151;"></div>
<div class="t" style="left:9.6px;top:214.03px;font-size:8.85px;color:#e4e4e4;">Материал</div>
<div class="t" style="left:191.6px;top:214.03px;font-size:8.85px;color:#e8e8e8;">С245</div>
<div class="a" style="left:3.7px;top:226.84000000000003px;width:340.3px;height:17.68px;background:#5b5b5b;"></div>
<div class="a" style="left:3.7px;top:243.52000000000004px;width:340.3px;height:1px;background:#515151;"></div>
<div class="a" style="left:188.3px;top:226.84000000000003px;width:1px;height:17.68px;background:#515151;"></div>
<div class="t" style="left:9.6px;top:231.71px;font-size:8.85px;color:#e4e4e4;">Стандарт материала</div>
<div class="t" style="left:191.6px;top:231.71px;font-size:8.85px;color:#e8e8e8;">ГОСТ 27772-2015</div>
<div class="a" style="left:3.7px;top:244.52000000000004px;width:340.3px;height:16.8px;background:#4c4c4c;"></div>
<div class="t" style="left:9.6px;top:249.40px;font-size:8.75px;color:#ececec;font-weight:bold;">Геометрия</div>
<div class="a" style="left:328.8px;top:253.02000000000004px;width:7px;height:1.6px;background:#f0f0f0;"></div>
<div class="a" style="left:3.7px;top:261.32000000000005px;width:340.3px;height:17.68px;background:#5b5b5b;"></div>
<div class="a" style="left:3.7px;top:278.00000000000006px;width:340.3px;height:1px;background:#515151;"></div>
<div class="a" style="left:188.3px;top:261.32000000000005px;width:1px;height:17.68px;background:#515151;"></div>
<div class="t" style="left:9.6px;top:266.19px;font-size:8.85px;color:#e4e4e4;">Длина, мм</div>
<div class="t" style="left:191.6px;top:266.19px;font-size:8.85px;color:#a0a0a0;">-1</div>
<div class="a" style="left:3.7px;top:279.00000000000006px;width:340.3px;height:17.68px;background:#5b5b5b;"></div>
<div class="a" style="left:3.7px;top:295.68000000000006px;width:340.3px;height:1px;background:#515151;"></div>
<div class="a" style="left:188.3px;top:279.00000000000006px;width:1px;height:17.68px;background:#515151;"></div>
<div class="t" style="left:9.6px;top:283.87px;font-size:8.85px;color:#e4e4e4;">Ширина, мм</div>
<div class="t" style="left:191.6px;top:283.87px;font-size:8.85px;color:#a0a0a0;">-1</div>
<div class="a" style="left:3.7px;top:296.68000000000006px;width:340.3px;height:17.68px;background:#5b5b5b;"></div>
<div class="a" style="left:3.7px;top:313.36000000000007px;width:340.3px;height:1px;background:#515151;"></div>
<div class="a" style="left:188.3px;top:296.68000000000006px;width:1px;height:17.68px;background:#515151;"></div>
<div class="t" style="left:9.6px;top:301.55px;font-size:8.85px;color:#e4e4e4;">Толщина, мм</div>
<div class="t" style="left:191.6px;top:301.55px;font-size:8.85px;color:#e8e8e8;">10</div>
<div class="a" style="left:3.7px;top:314.36000000000007px;width:340.3px;height:17.68px;background:#5b5b5b;"></div>
<div class="a" style="left:3.7px;top:331.0400000000001px;width:340.3px;height:1px;background:#515151;"></div>
<div class="a" style="left:188.3px;top:314.36000000000007px;width:1px;height:17.68px;background:#515151;"></div>
<div class="t" style="left:9.6px;top:319.23px;font-size:8.85px;color:#e4e4e4;">Площадь, м2</div>
<div class="t" style="left:191.6px;top:319.23px;font-size:8.85px;color:#a0a0a0;">0.04</div>
<div class="a" style="left:3.7px;top:332.0400000000001px;width:340.3px;height:16.8px;background:#4c4c4c;"></div>
<div class="t" style="left:9.6px;top:336.92px;font-size:8.75px;color:#ececec;font-weight:bold;">Вид</div>
<div class="a" style="left:328.8px;top:340.54px;width:7px;height:1.6px;background:#f0f0f0;"></div>
<div class="a" style="left:3.7px;top:348.8400000000001px;width:340.3px;height:17.68px;background:#5b5b5b;"></div>
<div class="a" style="left:3.7px;top:365.5200000000001px;width:340.3px;height:1px;background:#515151;"></div>
<div class="a" style="left:188.3px;top:348.8400000000001px;width:1px;height:17.68px;background:#515151;"></div>
<div class="t" style="left:9.6px;top:353.71px;font-size:8.85px;color:#e4e4e4;">Вид</div>
<div class="t" style="left:191.6px;top:353.71px;font-size:8.85px;color:#e8e8e8;">Спереди</div>
<div class="a" style="left:3.7px;top:366.5200000000001px;width:340.3px;height:17.68px;background:#5b5b5b;"></div>
<div class="a" style="left:3.7px;top:383.2000000000001px;width:340.3px;height:1px;background:#515151;"></div>
<div class="a" style="left:188.3px;top:366.5200000000001px;width:1px;height:17.68px;background:#515151;"></div>
<div class="t" style="left:9.6px;top:371.39px;font-size:8.85px;color:#e4e4e4;">Тип контура</div>
<div class="t" style="left:191.6px;top:371.39px;font-size:8.85px;color:#e8e8e8;">Произвольный</div>
<div class="a" style="left:3.7px;top:384.2000000000001px;width:340.3px;height:16.8px;background:#4c4c4c;"></div>
<div class="t" style="left:9.6px;top:389.08px;font-size:8.75px;color:#ececec;font-weight:bold;">Спецификация</div>
<div class="a" style="left:328.8px;top:392.70000000000005px;width:7px;height:1.6px;background:#f0f0f0;"></div>
<div class="a" style="left:3.7px;top:401.0000000000001px;width:340.3px;height:17.68px;background:#5b5b5b;"></div>
<div class="a" style="left:3.7px;top:417.6800000000001px;width:340.3px;height:1px;background:#515151;"></div>
<div class="a" style="left:188.3px;top:401.0000000000001px;width:1px;height:17.68px;background:#515151;"></div>
<div class="t" style="left:9.6px;top:405.87px;font-size:8.85px;color:#e4e4e4;">Марка</div>
<div class="t" style="left:191.6px;top:405.87px;font-size:8.85px;color:#e8e8e8;">Пл2</div>
<div class="a" style="left:3.7px;top:418.6800000000001px;width:340.3px;height:17.68px;background:#5b5b5b;"></div>
<div class="a" style="left:3.7px;top:435.3600000000001px;width:340.3px;height:1px;background:#515151;"></div>
<div class="a" style="left:188.3px;top:418.6800000000001px;width:1px;height:17.68px;background:#515151;"></div>
<div class="t" style="left:9.6px;top:423.55px;font-size:8.85px;color:#e4e4e4;">Масса ед, кг</div>
<div class="t" style="left:191.6px;top:423.55px;font-size:8.85px;color:#a0a0a0;">3.14</div>
<div class="a" style="left:3.7px;top:436.3600000000001px;width:340.3px;height:17.68px;background:#5b5b5b;"></div>
<div class="a" style="left:3.7px;top:453.04000000000013px;width:340.3px;height:1px;background:#515151;"></div>
<div class="a" style="left:188.3px;top:436.3600000000001px;width:1px;height:17.68px;background:#515151;"></div>
<div class="t" style="left:9.6px;top:441.23px;font-size:8.85px;color:#e4e4e4;">Включать в спецификацию</div>
<div class="t" style="left:191.6px;top:441.23px;font-size:8.85px;color:#e8e8e8;">Да</div>
<div class="a" style="left:3.7px;top:454.04000000000013px;width:340.3px;height:16.8px;background:#4c4c4c;"></div>
<div class="t" style="left:9.6px;top:458.92px;font-size:8.75px;color:#ececec;font-weight:bold;">Маркировка</div>
<div class="a" style="left:328.8px;top:462.5400000000001px;width:7px;height:1.6px;background:#f0f0f0;"></div>
<div class="a" style="left:3.7px;top:470.84000000000015px;width:340.3px;height:17.68px;background:#5b5b5b;"></div>
<div class="a" style="left:3.7px;top:487.52000000000015px;width:340.3px;height:1px;background:#515151;"></div>
<div class="a" style="left:188.3px;top:470.84000000000015px;width:1px;height:17.68px;background:#515151;"></div>
<div class="t" style="left:9.6px;top:475.71px;font-size:8.85px;color:#e4e4e4;">Обозначение</div>
<div class="t" style="left:191.6px;top:475.71px;font-size:8.85px;color:#e8e8e8;">Позиционная выноска</div>
<div class="a" style="left:3.7px;top:488.52000000000015px;width:340.3px;height:17.68px;background:#5b5b5b;"></div>
<div class="a" style="left:3.7px;top:505.20000000000016px;width:340.3px;height:1px;background:#515151;"></div>
<div class="a" style="left:188.3px;top:488.52000000000015px;width:1px;height:17.68px;background:#515151;"></div>
<div class="t" style="left:9.6px;top:493.39px;font-size:8.85px;color:#e4e4e4;">Строка</div>
<div class="t" style="left:191.6px;top:493.39px;font-size:8.85px;color:#e8e8e8;">Толщина</div>
<div class="a" style="left:1px;top:777px;width:346px;height:19px;background:#4f4f4f;"></div>
<div class="a" style="left:3px;top:777.5px;width:341px;height:1px;background:#6e6e6e;"></div>
<div class="a" style="left:3.5px;top:777.8px;width:51.9px;height:17px;background:#4d4d4d;border:1px solid #6e6e6e"></div>
<div class="t" style="left:-120.55px;width:300px;text-align:center;top:784.21px;font-size:8.9px;color:#b8b8b8;">Альбомы</div>
<div class="a" style="left:56.9px;top:777.8px;width:48.1px;height:17px;background:#4d4d4d;border:1px solid #6e6e6e"></div>
<div class="t" style="left:-69.05px;width:300px;text-align:center;top:784.21px;font-size:8.9px;color:#b8b8b8;">Объекты</div>
<div class="a" style="left:106px;top:777.8px;width:77.6px;height:17px;background:#4d4d4d;border:1px solid #6e6e6e"></div>
<div class="t" style="left:-5.199999999999989px;width:300px;text-align:center;top:784.21px;font-size:8.9px;color:#b8b8b8;">Менеджер пр...</div>
<div class="a" style="left:184.9px;top:777.8px;width:77.1px;height:17px;background:#4d4d4d;border:1px solid #6e6e6e"></div>
<div class="t" style="left:73.44999999999999px;width:300px;text-align:center;top:784.21px;font-size:8.9px;color:#b8b8b8;">База элементов</div>
<div class="a" style="left:264px;top:777.8px;width:24.80000000000001px;height:17px;background:#4d4d4d;border:1px solid #6e6e6e"></div>
<div class="t" style="left:126.39999999999998px;width:300px;text-align:center;top:784.21px;font-size:8.9px;color:#b8b8b8;">BCF</div>
<div class="a" style="left:288.8px;top:777.5px;width:53.9px;height:17.8px;background:#7a7a7a;"></div>
<div class="t" style="left:165.7px;width:300px;text-align:center;top:784.21px;font-size:8.9px;color:#f2f2f2;">Свойства</div>
<div class="a" style="left:348px;top:118px;width:4px;height:680px;background:#4e4e4e;"></div>
<div class="a" style="left:353px;top:118px;width:1207px;height:18px;background:#4d4d4d;"></div>
<div class="a" style="left:353px;top:134.3px;width:1204px;height:1.7px;background:#666666;"></div>
<div class="a" style="left:353.5px;top:121px;width:69.5px;height:12px;background:#3f3f3f;"></div>
<div class="t" style="left:370px;top:122.86px;font-size:9.0px;color:#9a9a9a;">Без имени0*</div>
<div class="a" style="left:423px;top:120px;width:96.6px;height:14px;background:#787878;"></div>
<div class="t" style="left:439.7px;top:122.81px;font-size:9.1px;color:#ececec;">Ф21.9-1.dwg*</div>
<svg style="left:509px;top:124px" width="7" height="7" viewBox="0 0 7 7"><path d="M0.5 0.5 L6.5 6.5 M6.5 0.5 L0.5 6.5" stroke="#e8e8e8" stroke-width="1"/></svg>
<svg style="left:1546px;top:124px" width="7" height="5" viewBox="0 0 7 5"><path d="M0 0 H7.5 L3.75 5Z" fill="#e8e8e8"/></svg>
<div class="a" style="left:352px;top:118px;width:2.2px;height:679px;background:#7c7c7c;"></div>
<div class="a" style="left:354.2px;top:136px;width:1202.3px;height:641.6px;background:#292929;"></div>
<div class="a" style="left:354.2px;top:136px;width:0.8px;height:641.6px;background:#1e1e1e;"></div>
<div class="a" style="left:1556px;top:118px;width:1.5px;height:680px;background:#4a4a4a;"></div>
<svg style="left:850px;top:150px" width="420" height="470" viewBox="0 0 420 470">
<rect x="15.9" y="65.8" width="2.4" height="236.2" rx="1.2" fill="none" stroke="#e8e8e8" stroke-width="1.4"/>
<path d="M92.5 66.6 H336 L394 133 V302 H92.5Z" fill="none" stroke="#e8e8e8" stroke-width="1.6"/>
<rect x="92.2" y="415" width="302.2" height="3" rx="1.4" fill="none" stroke="#e8e8e8" stroke-width="1.1"/>
<path d="M17.5 183.4 L53 48.6 H81.7" fill="none" stroke="#7a2898" stroke-width="1.5"/>
<path d="M243 185 L279.4 148.7 H308" fill="none" stroke="#7a2898" stroke-width="1.5"/>
<path d="M243.9 416.5 L315 451.8 H343.5" fill="none" stroke="#7a2898" stroke-width="1.5"/>
</svg>
<svg style="left:910.1px;top:184.8px" width="18" height="12" viewBox="0 0 18 12"><path d="M1.6 1.2 V10.2 M0 3.4 H3.3 M7.6 0.6 V11 M5.7 2.4 L7.6 0.6" fill="none" stroke="#bc1c1c" stroke-width="1.35"/><ellipse cx="13.2" cy="5.6" rx="2.3" ry="4.8" fill="none" stroke="#bc1c1c" stroke-width="1.35"/></svg>
<svg style="left:1136px;top:284.8px" width="18" height="12" viewBox="0 0 18 12"><path d="M1.6 1.2 V10.2 M0 3.4 H3.3 M7.6 0.6 V11 M5.7 2.4 L7.6 0.6" fill="none" stroke="#bc1c1c" stroke-width="1.35"/><ellipse cx="13.2" cy="5.6" rx="2.3" ry="4.8" fill="none" stroke="#bc1c1c" stroke-width="1.35"/></svg>
<svg style="left:1172px;top:588.3px" width="18" height="12" viewBox="0 0 18 12"><path d="M1.6 1.2 V10.2 M0 3.4 H3.3 M7.6 0.6 V11 M5.7 2.4 L7.6 0.6" fill="none" stroke="#bc1c1c" stroke-width="1.35"/><ellipse cx="13.2" cy="5.6" rx="2.3" ry="4.8" fill="none" stroke="#bc1c1c" stroke-width="1.35"/></svg>
<svg style="left:1400px;top:140px" width="160" height="170" viewBox="0 0 160 170">
<circle cx="76.8" cy="76.1" r="66.8" fill="none" stroke="#7c7c7c" stroke-width="1"/>
<circle cx="76.8" cy="76.1" r="33.4" fill="none" stroke="#7c7c7c" stroke-width="1"/>
<path d="M10 76.1 H143.6 M76.8 9.2 V143" stroke="#7c7c7c" stroke-width="1"/>
<circle cx="76.8" cy="76.1" r="4.6" fill="#a97a52"/>
</svg>
<div class="a" style="left:1453.6px;top:282.9px;width:44.4px;height:12.9px;background:#4a4a4a;border-radius:6.5px"></div>
<div class="t" style="left:1325.8px;width:300px;text-align:center;top:286.06px;font-size:8.8px;color:#a8a8a8;">Сверху</div>
<div class="a" style="left:353px;top:777.6px;width:1204px;height:19px;background:#4b4b4b;"></div>
<div class="a" style="left:354px;top:777.9px;width:1202px;height:1.5px;background:#7e7e7e;"></div>
<div class="a" style="left:352px;top:795.4px;width:1205px;height:1.6px;background:#828282;"></div>
<svg style="left:356px;top:780px" width="13" height="13" viewBox="0 0 13 13"><rect x="0.5" y="0.5" width="12" height="12" rx="1.5" fill="#3a3a3a" stroke="#8a8a8a" stroke-width="0.8"/><rect x="1" y="3" width="11" height="2.5" fill="#7ab0ee"/><path d="M1 8 H12 M1 10.5 H12" stroke="#8a8a8a" stroke-width="0.8"/></svg>
<div class="a" style="left:383px;top:779px;width:46.8px;height:15px;background:#7a7a7a;"></div>
<div class="t" style="left:390.5px;top:782.21px;font-size:9.1px;color:#f0f0f0;">Модель</div>
<div class="a" style="left:429.8px;top:779px;width:35.4px;height:15px;background:#4a4a4a;border:1px solid #666;border-left:none"></div>
<div class="t" style="left:436px;top:782.21px;font-size:9.1px;color:#b0b0b0;">Лист1</div>
<div class="a" style="left:357px;top:136.5px;width:287.5px;height:480px;background:#ffffff;border-radius:5px;overflow:hidden;box-shadow:0 1px 3px 0.5px rgba(0,0,0,0.28)">
<div class="a" style="left:0px;top:0px;width:287px;height:24.3px;background:#f0f0f0;"></div>
<div class="a" style="left:0px;top:436.5px;width:287.5px;height:43.5px;background:#f0f0f0;"></div>
<div class="a" style="left:274px;top:24.3px;width:13px;height:412.3px;background:#ffffff;"></div>
<div class="a" style="left:274px;top:24.3px;width:13px;height:297px;background:#e9e9e9;"></div>
<div class="a" style="left:274px;top:419px;width:13px;height:17px;background:#ececec;"></div>
</div>
<svg style="left:363.8px;top:141px" width="12" height="13" viewBox="0 0 12 13"><path d="M3 0.5 H11.5 V9 Q11.5 12.5 8 12.5 H0.5 V4 Q0.5 0.5 3 0.5Z" fill="#3ea6d8" stroke="#1e5f80" stroke-width="0.8"/><path d="M2.5 7.5 Q5 3.5 9.5 5 M3.5 8.5 Q7 9 9.5 5.5" fill="none" stroke="#ffffff" stroke-width="1"/></svg>
<div class="t" style="left:380.6px;top:143.68px;font-size:10.2px;color:#2a2a2a;transform:scaleX(0.8965);transform-origin:0 0;">Пластина</div>
<svg style="left:628.4px;top:143.8px" width="8.5" height="8.5" viewBox="0 0 8.5 8.5"><path d="M0.5 0.5 L8 8 M8 0.5 L0.5 8" stroke="#333333" stroke-width="1.1"/></svg>
<svg style="left:634px;top:165px" width="7" height="7" viewBox="0 0 7 7"><path d="M3.5 6.5 V1 M1 3.5 L3.5 1 L6 3.5" fill="none" stroke="#c4c4c4" stroke-width="0.9"/></svg>
<svg style="left:634px;top:561px" width="7" height="7" viewBox="0 0 7 7"><path d="M3.5 0.5 V6 M1 3.5 L3.5 6 L6 3.5" fill="none" stroke="#c4c4c4" stroke-width="0.9"/></svg>
<svg style="left:371.9px;top:173.9px" width="17" height="13.5" viewBox="0 0 17 13.5"><path d="M0.8 0.8 H10 L15.5 6.5 V12.4 H0.8Z" fill="none" stroke="#5ab4c6" stroke-width="1.6"/></svg>
<div class="t" style="left:400px;top:173.84px;font-size:13.2px;color:#7e7e7e;font-weight:bold;transform:scaleX(0.9421);transform-origin:0 0;">Профиль</div>
<svg style="left:602.5px;top:176.5px" width="11" height="7" viewBox="0 0 11 7"><path d="M0.8 6 L5.3 1.2 L9.8 6" fill="none" stroke="#b4b4b4" stroke-width="1.3"/></svg>
<div class="a" style="left:367.3px;top:203.3px;width:253.2px;height:15.1px;background:#ffffff;border:1px solid #b8b8b8;border-radius:1px"></div>
<div class="t" style="left:374.6px;top:205.59px;font-size:10.8px;color:#585858;transform:scaleX(0.8985);transform-origin:0 0;">-10 ГОСТ 82-70 С245</div>
<svg style="left:611.3px;top:209.2px" width="5.5" height="3.5" viewBox="0 0 5.5 3.5"><path d="M0 0 H5.2 L2.6 3Z" fill="#606060"/></svg>
<div class="a" style="left:367.3px;top:225px;width:253.2px;height:1px;background:#e4e4e4;"></div>
<div class="a" style="left:367.3px;top:229px;width:239.7px;height:23.9px;background:#56c0d6;"></div>
<div class="a" style="left:606.9px;top:229px;width:14px;height:49.7px;background:#e8e8e8;"></div>
<div class="a" style="left:606.9px;top:317px;width:14px;height:13.5px;background:#ececec;"></div>
<svg style="left:610.5px;top:231.5px" width="7" height="7" viewBox="0 0 7 7"><path d="M3.5 6.5 V1 M1 3.5 L3.5 1 L6 3.5" fill="none" stroke="#c8c8c8" stroke-width="0.9"/></svg>
<svg style="left:610.5px;top:320.5px" width="7" height="7" viewBox="0 0 7 7"><path d="M3.5 0.5 V6 M1 3.5 L3.5 6 L6 3.5" fill="none" stroke="#c8c8c8" stroke-width="0.9"/></svg>
<div class="a" style="left:372.7px;top:235px;width:215px;height:13px;overflow:hidden">
<div class="t" style="left:0px;top:0.65px;font-size:11.1px;color:#173c46;transform:scaleX(0.8793);transform-origin:0 0;">- ГОСТ 82-70 - Прокат стальной горячекатаный</div>
</div>
<svg style="left:597.3px;top:238.4px" width="5" height="5.5" viewBox="0 0 5 5.5"><path d="M0 0 L4.8 2.75 L0 5.5Z" fill="#1e1e1e"/></svg>
<div class="a" style="left:372.7px;top:259.5px;width:215px;height:13px;overflow:hidden">
<div class="t" style="left:0px;top:0.65px;font-size:11.1px;color:#555555;transform:scaleX(0.8793);transform-origin:0 0;">- ГОСТ 103-76 - Полоса стальная горячекатаная</div>
</div>
<svg style="left:597.3px;top:262.9px" width="5" height="5.5" viewBox="0 0 5 5.5"><path d="M0 0 L4.8 2.75 L0 5.5Z" fill="#1e1e1e"/></svg>
<div class="a" style="left:372.7px;top:283.3px;width:215px;height:13px;overflow:hidden">
<div class="t" style="left:0px;top:0.65px;font-size:11.1px;color:#555555;transform:scaleX(0.8793);transform-origin:0 0;">- ГОСТ 103-2006 - Полоса стальная горячекатаная</div>
</div>
<svg style="left:597.3px;top:286.7px" width="5" height="5.5" viewBox="0 0 5 5.5"><path d="M0 0 L4.8 2.75 L0 5.5Z" fill="#1e1e1e"/></svg>
<div class="a" style="left:372.7px;top:307.5px;width:215px;height:13px;overflow:hidden">
<div class="t" style="left:0px;top:0.65px;font-size:11.1px;color:#555555;transform:scaleX(0.8793);transform-origin:0 0;">- ГОСТ 8568-77 - Листы стальные с ромбическим рифлением</div>
</div>
<svg style="left:597.3px;top:310.9px" width="5" height="5.5" viewBox="0 0 5 5.5"><path d="M0 0 L4.8 2.75 L0 5.5Z" fill="#1e1e1e"/></svg>
<div class="a" style="left:367.3px;top:333.2px;width:253.2px;height:1px;background:#e6e6e6;"></div>
<div class="t" style="left:367.2px;top:343.19px;font-size:10.6px;color:#585858;transform:scaleX(0.9097);transform-origin:0 0;">Материал</div>
<div class="a" style="left:499px;top:341.2px;width:121.4px;height:14.8px;background:#ffffff;border:1px solid #b8b8b8;border-radius:1px"></div>
<div class="t" style="left:503.5px;top:343.29px;font-size:10.8px;color:#585858;transform:scaleX(0.9102);transform-origin:0 0;">С245</div>
<svg style="left:611.3px;top:347.2px" width="5.5" height="3.5" viewBox="0 0 5.5 3.5"><path d="M0 0 H5.2 L2.6 3Z" fill="#606060"/></svg>
<div class="a" style="left:357px;top:375.5px;width:274px;height:1px;background:#e2e2e2;"></div>
<svg style="left:373px;top:387.5px" width="15" height="16" viewBox="0 0 15 16"><path d="M1 15.5 L7.2 2.5 L13.4 15.5" fill="none" stroke="#5ab4c6" stroke-width="1.4"/><circle cx="7.2" cy="2.3" r="1.8" fill="none" stroke="#5ab4c6" stroke-width="1.1"/></svg>
<div class="t" style="left:399.5px;top:389.44px;font-size:13.2px;color:#7e7e7e;font-weight:bold;transform:scaleX(0.9665);transform-origin:0 0;">Геометрия</div>
<svg style="left:602.5px;top:392.5px" width="11" height="7" viewBox="0 0 11 7"><path d="M0.8 6 L5.3 1.2 L9.8 6" fill="none" stroke="#b4b4b4" stroke-width="1.3"/></svg>
<div class="t" style="left:367.2px;top:424.90px;font-size:11px;color:#585858;transform:scaleX(0.8810);transform-origin:0 0;">Тип контура</div>
<svg style="left:524.3px;top:426.2px" width="13.2" height="8.6" viewBox="0 0 13.2 8.6"><rect x="0.6" y="0.6" width="12" height="7.4" fill="none" stroke="#5ab4c6" stroke-width="1.2"/></svg>
<div class="a" style="left:545px;top:418.9px;width:29.7px;height:22.3px;background:#dedede;border-radius:1px"></div>
<svg style="left:553px;top:425.5px" width="14.5" height="9.5" viewBox="0 0 14.5 9.5"><path d="M0.6 0.6 H8.5 L13.6 5.5 V8.9 H0.6Z" fill="none" stroke="#5ab4c6" stroke-width="1.2"/></svg>
<svg style="left:582.5px;top:426.5px" width="14" height="6" viewBox="0 0 14 6"><path d="M0.5 4.5 Q3 0.5 6 3 Q9 5.5 13.5 1.5" fill="none" stroke="#5ab4c6" stroke-width="1.2"/></svg>
<div class="a" style="left:554px;top:458.5px;width:12.4px;height:1.1px;background:#a8dae4;"></div>
<div class="t" style="left:367.2px;top:476.70px;font-size:11px;color:#585858;transform:scaleX(0.9296);transform-origin:0 0;">Вид</div>
<div class="a" style="left:530.5px;top:477.5px;width:1.1px;height:9px;background:#a8dae4;"></div>
<div class="a" style="left:545px;top:470.8px;width:29.7px;height:22.2px;background:#dedede;border-radius:1px"></div>
<svg style="left:553px;top:477.3px" width="14.5" height="9.5" viewBox="0 0 14.5 9.5"><path d="M0.6 0.6 H8.5 L13.6 5.5 V8.9 H0.6Z" fill="none" stroke="#5ab4c6" stroke-width="1.2"/></svg>
<div class="a" style="left:588.6px;top:477.5px;width:1.1px;height:9px;background:#a8dae4;"></div>
<div class="a" style="left:554px;top:504.5px;width:12.4px;height:1.1px;background:#a8dae4;"></div>
<div class="t" style="left:367.2px;top:525.70px;font-size:11px;color:#585858;transform:scaleX(0.8888);transform-origin:0 0;">Длина, мм</div>
<div class="a" style="left:499.1px;top:523.3px;width:121.6px;height:14.8px;background:#f0f0f0;border:1px solid #a8a8a8"></div>
<div class="t" style="left:501.8px;top:525.79px;font-size:10.8px;color:#8a8a8a;transform:scaleX(0.8913);transform-origin:0 0;">Указать на чертеже</div>
<div class="t" style="left:367.2px;top:547.30px;font-size:11px;color:#585858;transform:scaleX(0.8883);transform-origin:0 0;">Ширина, мм</div>
<div class="a" style="left:499.1px;top:545.5px;width:121.6px;height:14.8px;background:#f0f0f0;border:1px solid #a8a8a8"></div>
<div class="t" style="left:501.8px;top:547.59px;font-size:10.8px;color:#8a8a8a;transform:scaleX(0.8913);transform-origin:0 0;">Указать на чертеже</div>
<div class="a" style="left:357px;top:566px;width:274px;height:7px;overflow:hidden">
<div class="a" style="left:142.1px;top:2px;width:121.6px;height:14.8px;background:#ffffff;border:1px solid #a8a8a8"></div>
<div class="t" style="left:10.2px;top:3.00px;font-size:11px;color:#4a4a4a;transform:scaleX(0.8985);transform-origin:0 0;">Толщина, мм</div>
<div class="t" style="left:147px;top:3.09px;font-size:10.8px;color:#4a4a4a;transform:scaleX(0.9157);transform-origin:0 0;">10</div>
</div>
<svg style="left:370.8px;top:589px" width="12" height="12" viewBox="0 0 12 12"><circle cx="5.9" cy="5.9" r="5.4" fill="#b4e2f4" stroke="#6c9cb4" stroke-width="0.8"/><text x="5.9" y="9.2" font-size="8.5" font-weight="bold" font-family="Liberation Sans" text-anchor="middle" fill="#2a3a48">?</text></svg>
<svg style="left:388.5px;top:587.5px" width="15" height="15" viewBox="0 0 15 15"><rect x="0.6" y="1" width="9.5" height="12" fill="none" stroke="#4a5a66" stroke-width="1"/><rect x="0.6" y="1" width="9.5" height="2" fill="#5fc4e8"/><rect x="2" y="4" width="1.6" height="1.6" fill="#7ab8d8"/><circle cx="9.5" cy="10" r="3.6" fill="#808080" stroke="#606060" stroke-width="1.4" stroke-dasharray="1.2 0.7"/><circle cx="9.5" cy="10" r="1.2" fill="#d8d8d8"/></svg>
<div class="a" style="left:412px;top:587px;width:1px;height:16px;background:#d8d8d8;"></div>
<svg style="left:424px;top:590.5px" width="10" height="10" viewBox="0 0 10 10"><path d="M5 0 V10 M0 5 H10" stroke="#a8dae4" stroke-width="1.1"/></svg>
<div class="a" style="left:444.3px;top:595px;width:10px;height:1.1px;background:#a8dae4;"></div>
<div class="a" style="left:465.5px;top:587px;width:1px;height:16px;background:#d8d8d8;"></div>
<div class="a" style="left:474px;top:585.8px;width:25.7px;height:19px;background:#d6d6d6;"></div>
<svg style="left:479.5px;top:588.5px" width="14" height="14" viewBox="0 0 14 14"><rect x="0.5" y="0.5" width="7" height="12" fill="#a8d8e4" stroke="#4a8aa0" stroke-width="0.9"/><path d="M2 3 H7 M2 5 H7 M2 7 H7 M2 9 H7" stroke="#4a8aa0" stroke-width="0.7"/><path d="M9 12.5 Q7 7 9.5 2 Q11 0.8 12 3" fill="none" stroke="#e03838" stroke-width="1.3"/><path d="M10.5 2.5 L13.5 4.5 L12 1Z" fill="#e03838"/></svg>
<svg style="left:506.5px;top:588px" width="13" height="14" viewBox="0 0 13 14"><rect x="3.5" y="0.5" width="8.5" height="10" fill="#f0f0f0" stroke="#7ac4d8" stroke-width="1"/><rect x="0.5" y="3.5" width="8.5" height="10" fill="#f0f0f0" stroke="#7ac4d8" stroke-width="1"/><path d="M2 6.5 H7.5 M2 8.5 H7.5 M2 10.5 H7.5" stroke="#7ac4d8" stroke-width="0.8"/></svg>
<div class="t" style="left:593.7px;top:588.94px;font-size:13.2px;color:#3a9ab4;">OK</div>
<div class="a" style="left:0px;top:797px;width:1557px;height:4px;background:#4b4b4b;"></div>
<div class="a" style="left:0px;top:795px;width:353px;height:2px;background:#4b4b4b;"></div>
<div class="a" style="left:0px;top:801px;width:1557px;height:56.5px;background:#585858;"></div>
<div class="a" style="left:1px;top:801px;width:15px;height:56px;background:#787878;"></div>
<svg style="left:4.5px;top:804.5px" width="7" height="7" viewBox="0 0 7 7"><path d="M0.5 0.5 L6.5 6.5 M6.5 0.5 L0.5 6.5" stroke="#f4f4f4" stroke-width="1.2"/></svg>
<svg style="left:5px;top:820px" width="7" height="9" viewBox="0 0 7 9"><rect x="1.5" y="0.5" width="4" height="4.5" fill="none" stroke="#eee" stroke-width="1"/><path d="M0 5.5 H7 M3.5 5.5 V8.5" stroke="#eee" stroke-width="1"/></svg>
<div class="t" style="left:2.6px;top:855.3px;font-size:11px;color:#cfcfcf;transform:rotate(-90deg) scaleX(0.84);transform-origin:0 0">Кома</div>
<div class="a" style="left:16px;top:802.3px;width:1541px;height:41px;overflow:hidden">
<div class="t" style="left:2.6px;top:-2.89px;font-size:9.52px;color:#e4e4e4;font-family:'Liberation Mono',monospace;">Точка растягивания или [Базовая точка/Копировать/Отменить/выХод]:</div>
<div class="t" style="left:2.6px;top:8.51px;font-size:9.52px;color:#e4e4e4;font-family:'Liberation Mono',monospace;">Точка растягивания или [Базовая точка/Копировать/Отменить/выХод]:</div>
<div class="t" style="left:2.6px;top:19.91px;font-size:9.52px;color:#e4e4e4;font-family:'Liberation Mono',monospace;">*Отмена*</div>
<div class="t" style="left:2.6px;top:31.41px;font-size:9.52px;color:#e4e4e4;font-family:'Liberation Mono',monospace;">stplate - Пластина</div>
</div>
<div class="a" style="left:16px;top:843.4px;width:1541px;height:1px;background:#4c4c4c;"></div>
<div class="a" style="left:16px;top:844.4px;width:1541px;height:13px;background:#5c5c5c;"></div>
<div class="t" style="left:18.6px;top:846.61px;font-size:9.52px;color:#e0e0e0;font-family:'Liberation Mono',monospace;">:</div>
<div class="a" style="left:0px;top:857.3px;width:1560px;height:18.5px;background:#464646;"></div>
<div class="a" style="left:0px;top:875.5px;width:1560px;height:1.5px;background:#f2f2f2;"></div>
<div class="t" style="left:4px;top:862.76px;font-size:8.8px;color:#e4e4e4;">56072.1137,22567.9705,0.0000</div>
<div class="a" style="left:136px;top:859px;width:1px;height:16px;background:#383838;"></div>
<div class="t" style="left:143.6px;top:862.95px;font-size:8.4px;color:#e0e0e0;">ШАГ</div>
<div class="a" style="left:169.6px;top:859px;width:1px;height:16px;background:#5a5a5a;"></div>
<div class="t" style="left:177.7px;top:862.95px;font-size:8.4px;color:#e0e0e0;">СЕТКА</div>
<div class="a" style="left:210px;top:859px;width:64px;height:16px;background:#536178;border:1px solid #6a84aa"></div>
<div class="t" style="left:92.0px;width:300px;text-align:center;top:862.95px;font-size:8.4px;color:#e8e8e8;">оПРИВЯЗКА</div>
<div class="a" style="left:274.5px;top:859px;width:77.19999999999999px;height:16px;background:#536178;border:1px solid #6a84aa"></div>
<div class="t" style="left:163.10000000000002px;width:300px;text-align:center;top:862.95px;font-size:8.4px;color:#e8e8e8;">3D оПРИВЯЗКА</div>
<div class="a" style="left:352.2px;top:859px;width:68.5px;height:16px;background:#536178;border:1px solid #6a84aa"></div>
<div class="t" style="left:236.45px;width:300px;text-align:center;top:862.95px;font-size:8.4px;color:#e8e8e8;">ОТС-ОБЪЕКТ</div>
<div class="a" style="left:421.2px;top:859px;width:65.5px;height:16px;background:#536178;border:1px solid #6a84aa"></div>
<div class="t" style="left:303.95px;width:300px;text-align:center;top:862.95px;font-size:8.4px;color:#e8e8e8;">ОТС-ПОЛЯР</div>
<div class="a" style="left:653.4px;top:859px;width:67.10000000000002px;height:16px;background:#536178;border:1px solid #6a84aa"></div>
<div class="t" style="left:536.95px;width:300px;text-align:center;top:862.95px;font-size:8.4px;color:#e8e8e8;">ШТРИХОВКА</div>
<div class="t" style="left:494.4px;top:862.95px;font-size:8.4px;color:#e0e0e0;">ОРТО</div>
<div class="t" style="left:533px;top:862.95px;font-size:8.4px;color:#e0e0e0;">ДИН-ВВОД</div>
<div class="t" style="left:594px;top:862.95px;font-size:8.4px;color:#e0e0e0;">ИЗО</div>
<div class="t" style="left:630.8px;top:862.95px;font-size:8.4px;color:#e0e0e0;">ВЕС</div>
<div class="a" style="left:526px;top:859px;width:1px;height:16px;background:#555555;"></div>
<div class="a" style="left:586.6px;top:859px;width:1px;height:16px;background:#555555;"></div>
<div class="a" style="left:619px;top:859px;width:1px;height:16px;background:#555555;"></div>
<div class="t" style="left:1073px;top:862.71px;font-size:8.9px;color:#d8d8d8;">МОДЕЛЬ</div>
<div class="a" style="left:1111.6px;top:859px;width:1px;height:16px;background:#555555;"></div>
<svg style="left:1114px;top:861.4px" width="12" height="11" viewBox="0 0 12 11"><rect x="0.5" y="5" width="6" height="5.5" rx="0.8" fill="none" stroke="#cfcfcf" stroke-width="1"/><path d="M2 5 V3.5 Q2 1.5 3.5 1.5" fill="none" stroke="#cfcfcf" stroke-width="1"/><rect x="5.5" y="2.5" width="6" height="4.5" rx="0.8" fill="none" stroke="#cfcfcf" stroke-width="1"/><path d="M7 2.5 V1.8 Q7 0.5 8.5 0.5 Q10 0.5 10 1.8 V2.5" fill="none" stroke="#cfcfcf" stroke-width="1"/></svg>
<div class="a" style="left:1129.2px;top:859px;width:1px;height:16px;background:#555555;"></div>
<svg style="left:1131.3px;top:862px" width="12" height="11" viewBox="0 0 12 11"><rect x="0" y="0" width="10" height="9" fill="#d8d8d8"/><path d="M5 10.5 L8 7.5 H11.5 Z" fill="#3a3a3a"/><path d="M5.5 10.8 L8.2 8 H11.5" fill="none" stroke="#d8d8d8" stroke-width="1"/></svg>
<div class="a" style="left:1220px;top:859px;width:1px;height:16px;background:#555555;"></div>
<svg style="left:1222px;top:861px" width="14" height="12" viewBox="0 0 14 12"><circle cx="4.5" cy="3.8" r="3.3" fill="#f2e29a"/><rect x="3" y="7" width="3" height="2" fill="#bbbbbb"/><path d="M1 5 V11 H7 M8 1 H12 V5" fill="none" stroke="#9a9a9a" stroke-width="0.8"/><path d="M8.5 5.5 V12 L10 10.6 L11.2 13 L12.2 12.5 L11 10.2 L13 10Z" fill="#f2f2f2"/></svg>
<div class="a" style="left:1237.6px;top:859px;width:1px;height:16px;background:#555555;"></div>
<svg style="left:1242px;top:861px" width="10" height="12" viewBox="0 0 10 12"><path d="M5 0.5 Q9.5 0.5 9.5 4.8 Q9.5 7 7.5 8.5 V10 H2.5 V8.5 Q0.5 7 0.5 4.8 Q0.5 0.5 5 0.5Z" fill="#e2e2e2"/><rect x="3" y="10.3" width="4" height="1.5" fill="#aaaaaa"/></svg>
<div class="a" style="left:1255.8px;top:859px;width:48px;height:16px;background:#536178;border:1px solid #6a84aa"></div>
<div class="a" style="left:1279.6px;top:859px;width:1px;height:16px;background:#6a84aa;"></div>
<svg style="left:1261px;top:861px" width="13" height="12" viewBox="0 0 13 12"><circle cx="6.5" cy="6" r="5.2" fill="none" stroke="#d03a4a" stroke-width="1.6"/><path d="M4.5 3 V9 L5.8 7.8 L6.8 9.8 L7.6 9.4 L6.7 7.5 L8.5 7.3Z" fill="#f4f4f4"/></svg>
<svg style="left:1284px;top:860.5px" width="15" height="13" viewBox="0 0 15 13"><path d="M1.5 0.5 V11.5 H14 M12 9.5 L14 11.5 L12 13.5" fill="none" stroke="#e8e8e8" stroke-width="1"/><path d="M9 1 L6.5 5.5 H9 L7 9" fill="none" stroke="#e8e8e8" stroke-width="1"/></svg>
<div class="t" style="left:1327.5px;top:863.21px;font-size:8.9px;color:#e0e0e0;">m1:20</div>
<div class="a" style="left:1375.8px;top:859px;width:1px;height:16px;background:#555555;"></div>
<div class="a" style="left:1399.7px;top:859px;width:1px;height:16px;background:#555555;"></div>
<div class="a" style="left:1423px;top:859px;width:1px;height:16px;background:#555555;"></div>
<div class="a" style="left:1446.7px;top:859px;width:1px;height:16px;background:#555555;"></div>
<div class="a" style="left:1470.8px;top:859px;width:1px;height:16px;background:#555555;"></div>
<div class="a" style="left:1493.7px;top:859px;width:1px;height:16px;background:#555555;"></div>
<div class="a" style="left:1516.7px;top:859px;width:1px;height:16px;background:#555555;"></div>
<div class="a" style="left:1535.8px;top:859px;width:1px;height:16px;background:#555555;"></div>
<svg style="left:1383px;top:860.5px" width="13" height="13" viewBox="0 0 13 13"><path d="M3 12.5 Q0.5 9 0.8 7 Q1.5 6 3 7.5 V2.5 Q3 1.3 4 1.3 Q5 1.3 5 2.5 V6 V1.5 Q5 0.3 6 0.3 Q7 0.3 7 1.5 V6 V2 Q7 0.8 8 0.8 Q9 0.8 9 2 V6.5 V3.5 Q9 2.5 10 2.5 Q11 2.5 11 3.5 V8.5 Q11 12.5 8 12.5Z" fill="#f4f4f4" stroke="#777" stroke-width="0.5"/></svg>
<svg style="left:1408px;top:860.5px" width="14" height="14" viewBox="0 0 14 14"><circle cx="5.2" cy="5.2" r="4.3" fill="#bfe0fa" stroke="#8fb8dc" stroke-width="1"/><path d="M8.5 8.5 L13 13" stroke="#6aa0d8" stroke-width="2"/></svg>
<div class="a" style="left:1430.8px;top:860px;width:13.2px;height:13.7px;background:#6fa8ef;"></div>
<svg style="left:1432.5px;top:861.5px" width="11" height="11" viewBox="0 0 11 11"><circle cx="4.5" cy="4.5" r="3.6" fill="#8dc0f4" stroke="#1e4a7a" stroke-width="1.1"/><path d="M7.2 7.2 L10.5 10.5" stroke="#1e4a7a" stroke-width="1.6"/></svg>
<svg style="left:1453px;top:860.5px" width="15" height="14" viewBox="0 0 15 14"><rect x="0.5" y="0.5" width="10" height="10" fill="none" stroke="#6fa8ef" stroke-width="1.2"/><rect x="0.5" y="0.5" width="10" height="2" fill="#6fa8ef"/><circle cx="8.5" cy="8" r="3.3" fill="#404040" stroke="#dddddd" stroke-width="1"/><path d="M10.8 10.3 L14 13.5" stroke="#dddddd" stroke-width="1.4"/></svg>
<svg style="left:1477.5px;top:860px" width="14" height="14" viewBox="0 0 14 14"><ellipse cx="7" cy="8" rx="6.3" ry="3" fill="none" stroke="#c4c4c4" stroke-width="1"/><path d="M7 0.5 V13.5" stroke="#c4c4c4" stroke-width="1.4"/></svg>
<svg style="left:1501.7px;top:861px" width="12" height="12" viewBox="0 0 12 12"><path d="M1.5 6 A4.5 4.5 0 0 1 9.8 3.6 M10.5 6 A4.5 4.5 0 0 1 2.2 8.4" fill="none" stroke="#7cd048" stroke-width="1.8"/><path d="M8 2 L11 1.5 L10.5 5Z M4 10 L1 10.5 L1.5 7Z" fill="#7cd048"/></svg>
<svg style="left:1518.3px;top:860.5px" width="14" height="13" viewBox="0 0 14 13"><rect x="0.5" y="0.5" width="10" height="9" fill="none" stroke="#d8d8d8" stroke-width="1"/><rect x="0.5" y="0.5" width="10" height="2" fill="#d8d8d8"/><rect x="6" y="7" width="7.5" height="5.5" fill="#d8d8d8"/><path d="M7.5 7 V5.5 Q7.5 4 9.7 4 Q12 4 12 5.5 V7" fill="none" stroke="#d8d8d8" stroke-width="1"/></svg>
<svg style="left:1542.5px;top:860.5px" width="14" height="14" viewBox="0 0 14 14"><rect x="2.5" y="2.5" width="9" height="8" fill="#4aa8e8" stroke="#e8e8e8" stroke-width="1"/><path d="M0.5 3 V0.5 H3 M11 0.5 H13.5 V3 M13.5 11 V13.5 H11 M3 13.5 H0.5 V11" fill="none" stroke="#cfcfcf" stroke-width="1"/></svg>
</body></html>
